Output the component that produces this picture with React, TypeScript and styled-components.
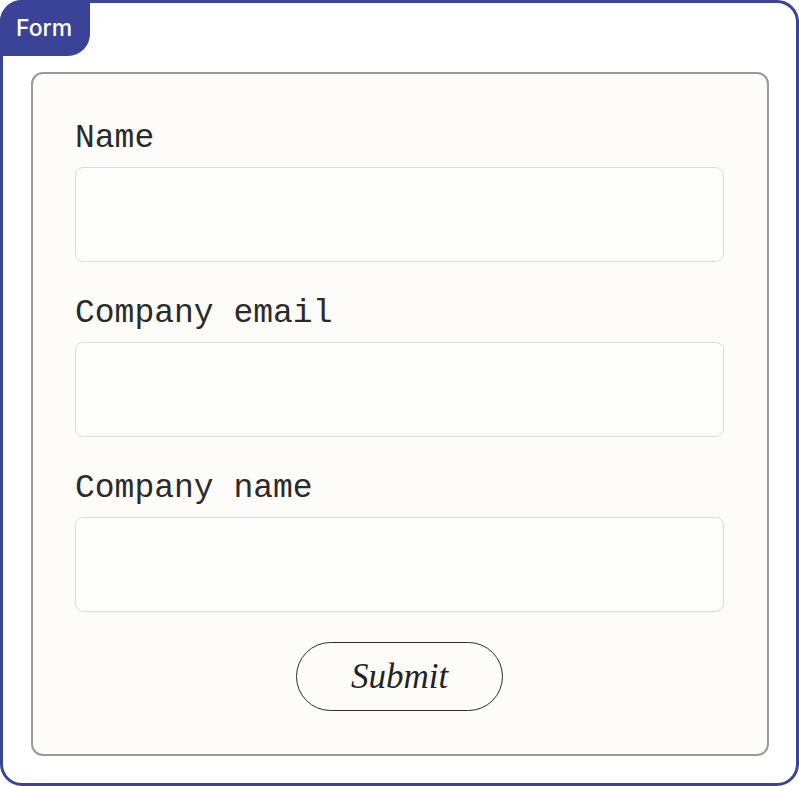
import React from "react";
import styled, { createGlobalStyle } from "styled-components";

const GlobalStyle = createGlobalStyle`
  html, body {
    margin: 0;
    padding: 0;
    background: #ffffff;
  }
  * {
    box-sizing: border-box;
  }
`;

const Frame = styled.div`
  position: relative;
  width: 799px;
  height: 786px;
  border: 3px solid #3a4398;
  border-radius: 22px;
  padding: 69px 27px 27px 28px;
  background: #ffffff;
`;

const Tag = styled.div`
  position: absolute;
  top: -3px;
  left: -3px;
  width: 90px;
  height: 56px;
  background: #3a4398;
  border-top-left-radius: 22px;
  border-bottom-right-radius: 22px;
  color: #ffffff;
  font-family: Inter, "Liberation Sans", Arial, sans-serif;
  font-weight: 500;
  font-size: 23px;
  line-height: 56px;
  padding-left: 16px;
`;

const Card = styled.form`
  display: flex;
  flex-direction: column;
  gap: 32px;
  height: 100%;
  border: 2px solid #9a9a98;
  border-radius: 12px;
  background: #fdfcf8;
  padding: 45px 43px 43px 42px;
`;

const Field = styled.div`
  display: flex;
  flex-direction: column;
  gap: 8px;
`;

const Label = styled.label`
  font-family: "Liberation Mono", "DejaVu Sans Mono", monospace;
  font-size: 33px;
  line-height: 40px;
  color: #2a2a2a;
`;

const Input = styled.input`
  height: 95px;
  width: 100%;
  border: 1px solid #dcdcd9;
  border-radius: 8px;
  background: #fdfdfb;
  outline: none;
  font-family: "Liberation Mono", monospace;
  font-size: 20px;
  padding: 0 16px;
`;

const Actions = styled.div`
  display: flex;
  justify-content: center;
  margin-top: -2px;
`;

const SubmitButton = styled.button`
  width: 207px;
  height: 69px;
  border: 1px solid #2c2c2c;
  border-radius: 35px;
  background: transparent;
  font-family: "Liberation Serif", "Times New Roman", serif;
  font-style: italic;
  font-size: 35px;
  color: #1f2420;
  cursor: pointer;
  padding: 0;
`;

const fields = [
  { id: "name", label: "Name", type: "text" },
  { id: "email", label: "Company email", type: "email" },
  { id: "company", label: "Company name", type: "text" },
];

const App: React.FC = () => {
  return (
    <>
      <GlobalStyle />
      <Frame>
        <Tag>Form</Tag>
        <Card onSubmit={(e) => e.preventDefault()}>
          {fields.map((f) => (
            <Field key={f.id}>
              <Label htmlFor={f.id}>{f.label}</Label>
              <Input id={f.id} type={f.type} />
            </Field>
          ))}
          <Actions>
            <SubmitButton type="submit">Submit</SubmitButton>
          </Actions>
        </Card>
      </Frame>
    </>
  );
};

export default App;
